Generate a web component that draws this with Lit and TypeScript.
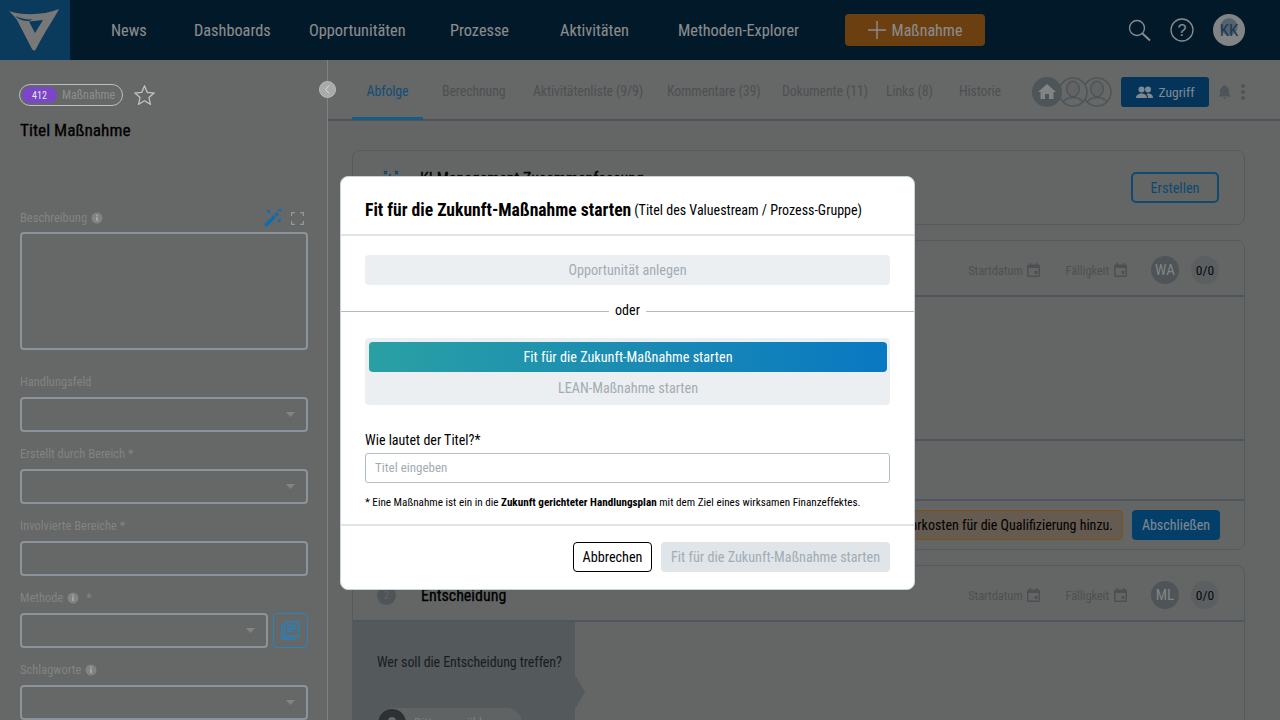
import { LitElement, html, css, svg } from "lit";
import { customElement } from "lit/decorators.js";

const FONT = css`"Liberation Sans Narrow", "Roboto Condensed", "Liberation Sans", sans-serif`;

const caret = html`<svg class="caret" width="9" height="5" viewBox="0 0 9 5"><path d="M0 0h9L4.500 5z"/></svg>`;
const info = html`<svg class="info" width="12" height="12" viewBox="0 0 12 12"><circle cx="6" cy="6" r="5.500" fill="currentColor"/><rect x="5.200" y="5" width="1.600" height="4" fill="#abacac"/><rect x="5.200" y="2.800" width="1.600" height="1.500" fill="#abacac"/></svg>`;
const cal = html`<svg class="cal" width="13" height="14" viewBox="0 0 13 14"><path fill="currentColor" d="M2.500 0H4v1.500h5V0h1.500v1.500h1A1.500 1.500 0 0 1 13 3v9.500a1.500 1.500 0 0 1-1.500 1.500h-10A1.500 1.500 0 0 1 0 12.500V3a1.500 1.500 0 0 1 1.500-1.500h1zM1.500 5v7.500h10V5zM7.500 8h3v3h-3z"/></svg>`;
const person = (x: number) => svg`<g transform="translate(${x} 0)"><circle cx="15" cy="15" r="14" fill="#abacac" stroke="#808e93" stroke-width="1.500"/><ellipse cx="15" cy="12" rx="7" ry="8.500" fill="#808e93"/><ellipse cx="15" cy="12" rx="5.500" ry="7" fill="#a2a6a8"/><path d="M5 25.500c2-4 6-5 10-5s8 1 10 5" fill="none" stroke="#808e93" stroke-width="1.300"/></g>`;

@customElement("app-root")
export class AppRoot extends LitElement {
  static styles = css`
    :host { display: block; width: 1280px; height: 720px; overflow: hidden; position: relative; font-family: ${FONT}; color: #000; background: #abacac; }
    .page { display: flex; flex-direction: column; height: 720px; }
    .top { flex: none; height: 60px; background: #042b46; display: flex; align-items: center; color: #e6e9eb; }
    .logo { width: 70px; height: 60px; background: #126199; display: flex; }
    .nav { display: flex; font-size: 16.300px; margin-left: 41px; }
    .nav span { flex: none; }
    .add { width: 140px; height: 32px; background: #b2691b; border-radius: 4px; display: flex; align-items: center; justify-content: center; gap: 6px; font-size: 16px; }
    .topicons { margin-left: auto; margin-right: 35px; display: flex; align-items: center; gap: 19px; }
    .avatar { width: 32px; height: 32px; border-radius: 50%; background: radial-gradient(circle at 50% 40%, #8aa4ba 0 8px, #d8dadc 9px); color: #2f6185; display: flex; align-items: center; justify-content: center; font-size: 17px; }
    .main { flex: 1; display: flex; min-height: 0; }
    .side { flex: none; width: 328px; box-sizing: border-box; border-right: 1px solid #7c8285; padding: 24px 20px 0; position: relative; z-index: 1; }
    .collapse { position: absolute; right: -9px; top: 21px; width: 17px; height: 17px; border-radius: 50%; border: 1px solid #b8bec2; background: #a8a9a9; box-sizing: border-box; display: flex; align-items: center; justify-content: center; }
    .badgeRow { display: flex; align-items: center; gap: 11px; height: 22px; margin-left: -1px; }
    .badge { display: flex; align-items: center; width: 104px; height: 22px; box-sizing: border-box; border: 1px solid #b8bec2; border-radius: 11px; padding: 2px; font-size: 12px; color: #8c8f90; gap: 5px; }
    .num { width: 35px; height: 16px; border-radius: 8px; background: #7b46c8; color: #e6e6ee; font-size: 10px; display: flex; align-items: center; justify-content: center; }
    .ttl { font-size: 17.300px; margin-top: 13px; height: 22px; line-height: 22px; -webkit-text-stroke: .3px #000; }
    .descHead { margin-top: 69px; display: flex; align-items: center; height: 16px; justify-content: space-between; }
    .lab { font-size: 12.500px; color: #808485; display: flex; align-items: center; gap: 4px; height: 16px; line-height: 16px; }
    .info { color: #808485; }
    .descIcons { display: flex; align-items: center; gap: 9px; padding-right: 4px; }
    .ta { height: 118px; margin-top: 6px; border: 2px solid #8b949b; box-sizing: border-box; border-radius: 4px; width: 288px; }
    .field { margin-top: 14px; }
    .field.first { margin-top: 24px; }
    .ctlRow { display: flex; gap: 5px; margin-top: 7px; }
    .ctl { flex: 1; height: 35px; border: 2px solid #8b949b; box-sizing: border-box; border-radius: 4px; display: flex; align-items: center; justify-content: flex-end; padding-right: 11px; }
    .caret path { fill: #808485; }
    .f { width: 288px; }
    .docbtn { flex: none; width: 35px; height: 35px; box-sizing: border-box; border: 1.500px solid #2a84bc; border-radius: 4px; display: flex; align-items: center; justify-content: center; }
    .content { flex: 1; min-width: 0; display: flex; flex-direction: column; background: #a7aaa8; }
    .tabs { flex: none; height: 61px; box-sizing: border-box; border-bottom: 2px solid #848a94; display: flex; align-items: center; background: #abacac; position: relative; padding-left: 24px; }
    .tablist { display: flex; align-self: stretch; font-size: 13.800px; letter-spacing: -.1px; color: #80868a; }
    .tab { flex: none; display: flex; align-items: center; box-sizing: border-box; height: 60px; padding-top: 2px; }
    .tab.on { color: #1a82c4; border-bottom: 3px solid #2a98dc; justify-content: center; margin-right: 19px; padding-top: 5px; }
    .acts { position: absolute; left: 704px; top: 17px; display: flex; align-items: center; }
    .zug { width: 88px; height: 30px; background: #075896; color: #d4e2ee; border-radius: 3px; margin-left: 9px; display: flex; align-items: center; justify-content: center; gap: 6px; font-size: 13.500px; }
    .bell { margin-left: 9px; display: flex; }
    .cards { flex: 1; min-height: 0; overflow: hidden; padding: 29px 35px 0 24px; display: flex; flex-direction: column; gap: 15px; }
    .card { flex: none; border: 1px solid #8b97a1; border-radius: 8px; box-sizing: border-box; }
    .c1 { height: 75px; display: flex; align-items: center; padding: 0 25px 0 27px; position: relative; }
    .kihead { position: absolute; left: 67px; top: 18px; font-size: 16px; -webkit-text-stroke: .3px #000; }
    .sparkle { margin-top: -16px; }
    .erst { margin-left: auto; width: 88px; height: 31px; border: 2px solid #1c7cb8; box-sizing: border-box; border-radius: 5px; color: #117bbb; font-size: 14.300px; display: flex; align-items: center; justify-content: center; }
    .c2 { height: 310px; display: flex; flex-direction: column; }
    .c3 { height: 200px; display: flex; flex-direction: column; border-bottom: 0; }
    .chead { flex: none; height: 56px; box-sizing: border-box; border-bottom: 2px solid #84909a; display: flex; align-items: center; padding: 4px 25px 0 24px; font-size: 12.500px; letter-spacing: -.1px; color: #80868a; }
    .numdot { width: 19px; height: 19px; border-radius: 50%; background: #838d92; color: #a7aaa8; font-size: 11px; display: flex; align-items: center; justify-content: center; }
    .cname { margin-left: 25px; font-size: 16px; letter-spacing: 0; color: #000; -webkit-text-stroke: .3px #000; }
    .cmeta { margin-left: auto; display: flex; align-items: center; }
    .cmeta .d { display: flex; align-items: center; gap: 5px; }
    .d + .d { margin-left: 25px; }
    .who { width: 28px; height: 28px; border-radius: 50%; background: #838d92; color: #d8dcde; display: flex; align-items: center; justify-content: center; margin-left: 24px; font-size: 15px; letter-spacing: 0; }
    .cnt { width: 28px; height: 28px; border-radius: 50%; background: #999ea3; color: #111; display: flex; align-items: center; justify-content: center; margin-left: 12px; font-size: 13.500px; letter-spacing: 0; }
    .cb1 { flex: none; height: 144px; border-bottom: 2px solid #84909a; box-sizing: border-box; }
    .cb2 { flex: none; height: 60px; border-bottom: 2px solid #84909a; box-sizing: border-box; }
    .cfoot { flex: 1; display: flex; align-items: center; justify-content: flex-end; padding-right: 24px; gap: 9px; }
    .warn { height: 30px; box-sizing: border-box; border: 1.500px solid #c98a30; border-radius: 4px; background: #a99886; padding: 0 9px; display: flex; align-items: center; font-size: 14px; white-space: nowrap; }
    .absch { width: 88px; height: 30px; background: #076ab0; border-radius: 4px; color: #d4e2ee; display: flex; align-items: center; justify-content: center; font-size: 14px; }
    .dec { flex: 1; display: flex; min-height: 0; }
    .decL { width: 222px; flex: none; background: #8c9498; padding: 31px 0 0 24px; box-sizing: border-box; position: relative; font-size: 14px; letter-spacing: -.1px; color: #2b3338; white-space: nowrap; line-height: 18px; }
    .decL::after { content: ""; position: absolute; right: -10px; top: 53px; border-left: 10px solid #8c9498; border-top: 17px solid transparent; border-bottom: 17px solid transparent; }
    .chip { margin-top: 37px; width: 144px; height: 30px; border-radius: 15px; background: #9ea5a7; display: flex; align-items: center; gap: 8px; padding-left: 1px; color: #d0d6d9; font-size: 13px; }
    .chip i { display: flex; align-items: center; justify-content: center; width: 28px; height: 28px; border-radius: 50%; background: #4c5256; }
    .chip i::before { content: ""; width: 8px; height: 8px; border-radius: 50%; background: #abacac; margin-top: -4px; }
    .scrim { position: absolute; inset: 0; background: rgba(0,0,0,.4); }
    .modal { position: absolute; left: 340px; top: 176px; width: 575px; height: 414px; box-sizing: border-box; background: #fff; border: 1px solid #c8d4da; border-radius: 8px; display: flex; flex-direction: column; }
    .mhead { flex: none; height: 59px; box-sizing: border-box; border-bottom: 2px solid #dee4e8; padding: 8px 24px 0; display: flex; align-items: center; gap: 3px; white-space: nowrap; }
    .mhead b { font-size: 17.600px; font-weight: 700; }
    .mhead span { font-size: 14px; }
    .mbody { flex: 1; display: flex; flex-direction: column; }
    .opp { margin: 19px 24px 0; height: 30px; background: #eceff2; border-radius: 4px; color: #a3acb3; font-size: 14.200px; display: flex; align-items: center; justify-content: center; }
    .oder { margin-top: 18px; height: 16px; display: flex; align-items: center; gap: 6px; font-size: 14px; }
    .oder span { margin-top: -3px; }
    .oder::before, .oder::after { content: ""; flex: 1; height: 1px; background: #b3bcc4; }
    .seg { margin: 19px 24px 0; height: 67px; background: #eceff2; border-radius: 4px; padding: 4px 3px 0 4px; box-sizing: border-box; color: #a3acb3; font-size: 14.200px; text-align: center; }
    .segon { height: 30px; border-radius: 4px; background: linear-gradient(90deg, #2aa0a4, #0a78c2); color: #fff; display: flex; align-items: center; justify-content: center; margin-bottom: 8px; }
    .q { margin: 26px 24px 0; font-size: 14px; height: 18px; line-height: 18px; }
    .inp { margin: 4px 24px 0; height: 30px; box-sizing: border-box; border: 1.500px solid #b3bfc6; border-radius: 3px; padding: 0 0 2px 9px; display: flex; align-items: center; color: #a3acb3; font-size: 13px; }
    .note { margin: 12px 24px 0; font-size: 11.150px; height: 15px; line-height: 15px; white-space: nowrap; }
    .note b { font-weight: 700; }
    .mfoot { flex: none; height: 65px; box-sizing: border-box; border-top: 2px solid #dee4e8; display: flex; align-items: flex-start; justify-content: flex-end; padding: 16px 24px 0 0; gap: 9px; }
    .abb { width: 79px; height: 30px; box-sizing: border-box; border: 1.500px solid #000; border-radius: 4px; font-size: 14.200px; display: flex; align-items: center; justify-content: center; }
    .go { width: 229px; height: 30px; border-radius: 4px; background: #dfe5e9; color: #a3acb3; font-size: 14.200px; display: flex; align-items: center; justify-content: center; }
  `;

  field(label: unknown, ctl: unknown, cls = "") {
    return html`<div class="field f ${cls}"><div class="lab">${label}</div><div class="ctlRow">${ctl}</div></div>`;
  }

  render() {
    const select = html`<div class="ctl">${caret}</div>`;
    const navItems: [string, number][] = [["News", 83], ["Dashboards", 115], ["Opportunitäten", 141], ["Prozesse", 110], ["Aktivitäten", 118], ["Methoden-Explorer", 167]];
    const tabs: [string, number][] = [["Abfolge", 71], ["Berechnung", 91], ["Aktivitätenliste (9/9)", 134], ["Kommentare (39)", 115], ["Dokumente (11)", 104], ["Links (8)", 73], ["Historie", 60]];
    return html`
      <div class="page">
        <div class="top">
          <div class="logo">
            <svg width="70" height="60" viewBox="0 0 70 60">
              <path fill="#c8c8c8" d="M9 11C24 16 44 15 59 9 55 17 47 28 36 49q-2 3-4 0L17 20C14 16 11 13 9 11z"/>
              <path fill="#126199" d="M15 16c7 3 13 4 18 3l-4 2c-5 0-10-1-14-5zM29 21.500 43 20 35 33z"/>
            </svg>
          </div>
          <div class="nav">${navItems.map(([t, w]) => html`<span style="width:${w}px">${t}</span>`)}</div>
          <div class="add"><svg width="18" height="18" viewBox="0 0 18 18"><path d="M9 0v18M0 9h18" stroke="#e6e9eb" stroke-width="1.500"/></svg>Maßnahme</div>
          <div class="topicons">
            <svg width="23" height="23" viewBox="0 0 23 23" fill="none" stroke="#e6e9eb"><circle cx="9" cy="9" r="7.500" stroke-width="1.300"/><path d="M14.500 14.500l7.500 7" stroke-width="2"/></svg>
            <svg width="24" height="24" viewBox="0 0 24 24" fill="none"><circle cx="12" cy="12" r="11" stroke="#e6e9eb" stroke-width="1.300"/><text x="12" y="17.500" text-anchor="middle" font-size="16" fill="#e6e9eb" font-family="Liberation Sans">?</text></svg>
            <div class="avatar">KK</div>
          </div>
        </div>
        <div class="main">
          <div class="side">
            <div class="collapse"><svg width="7" height="9" viewBox="0 0 7 9" fill="none"><path d="M5 .5L1.500 4.500 5 8.500" stroke="#d8dcde"/></svg></div>
            <div class="badgeRow">
              <div class="badge"><span class="num">412</span>Maßnahme</div>
              <svg width="21" height="20" viewBox="0 0 21 20" fill="none"><path d="M10.500 1l2.800 6.300 6.700.7-5 4.600 1.400 6.700-5.900-3.500-5.900 3.500 1.400-6.700-5-4.600 6.700-.7z" stroke="#bcc2c6" stroke-width="1.300"/></svg>
            </div>
            <div class="ttl">Titel Maßnahme</div>
            <div class="descHead f">
              <div class="lab">Beschreibung ${info}</div>
              <div class="descIcons">
                <svg width="18" height="18" viewBox="0 0 18 18"><path fill="#076fb2" d="M0 15.500 9.500 6l2.500 2.500L2.500 18zM10.500 5l2-2 2.500 2.500-2 2z"/><path stroke="#076fb2" stroke-width="1.200" d="M3 1l3 3M6 1L3 4M14.500 0l2.500 2.500M17 0l-2.500 2.500M14 10.500l2.500 2.500M16.500 10.500 14 13"/></svg>
                <svg width="13" height="13" viewBox="0 0 13 13" fill="none" stroke="#8f989d" stroke-width="1.200"><path d="M0.600 4V.6H4M9 .6h3.400V4M12.400 9v3.400H9M4 12.400H.6V9"/></svg>
              </div>
            </div>
            <div class="ta"></div>
            ${this.field("Handlungsfeld", select, "first")}
            ${this.field("Erstellt durch Bereich *", select)}
            ${this.field("Involvierte Bereiche *", html`<div class="ctl"></div>`)}
            ${this.field(html`Methode ${info} <span>&nbsp;*</span>`, html`${select}<div class="docbtn"><svg width="19" height="19" viewBox="0 0 19 19" fill="none"><rect x="3.500" y=".7" width="14.500" height="14.500" rx="1" stroke="#1e84c6" stroke-width="1.400"/><path d="M.8 3.500V17a1 1 0 0 0 1 1H15" stroke="#1e84c6" stroke-width="1.400"/><path d="M6 4.500h9.500M6 7.500h9.500M6 10.500h6" stroke="#1e84c6" stroke-width="1.500"/></svg></div>`)}
            ${this.field(html`Schlagworte ${info}`, select)}
          </div>
          <div class="content">
            <div class="tabs">
              <div class="tablist">${tabs.map(([t, w], i) => html`<div class="tab ${i === 0 ? "on" : ""}" style="width:${w}px">${t}</div>`)}</div>
              <div class="acts">
                <svg width="80" height="30" viewBox="0 0 80 30">
                  ${person(50)}${person(26)}
                  <circle cx="15" cy="15" r="15" fill="#808e93"/>
                  <path d="M15 7l9 8h-2.500v7h-4.500v-5h-4v5H8.500v-7H6z" fill="#d8dcde"/>
                </svg>
                <div class="zug"><svg width="17" height="13" viewBox="0 0 17 13" fill="#d4e2ee"><circle cx="5.500" cy="3.500" r="3"/><circle cx="12" cy="3.500" r="3"/><path d="M0 12c0-3 2.500-4.500 5.500-4.500S11 9 11 12zM12 12c0-1.500-.5-3-1.500-4 .5-.3 1-.4 1.500-.4 2.800 0 5 1.400 5 4.400z"/></svg>Zugriff</div>
                <div class="bell"><svg width="13" height="15" viewBox="0 0 13 15" fill="#808e93"><path d="M6.500 0C7.300 0 8 .6 8 1.400c2 .6 3 2.400 3 4.600v3l2 2.500H0L2 9V6c0-2.200 1-4 3-4.600C5 .6 5.700 0 6.500 0zM5 12.500h3a1.500 1.500 0 0 1-3 0z"/></svg></div>
                <svg style="margin-left:10px" width="4" height="16" viewBox="0 0 4 16" fill="#808e93"><circle cx="2" cy="2" r="2"/><circle cx="2" cy="8" r="2"/><circle cx="2" cy="14" r="2"/></svg>
              </div>
            </div>
            <div class="cards">
              <div class="card c1">
                <svg class="sparkle" width="20" height="20" viewBox="0 0 20 20"><path stroke="#076fb2" stroke-width="1.300" d="M4 1l3 3M7 1L4 4M15 1l3 3M18 1l-3 3M9 5h2"/></svg>
                <div class="kihead">KI-Management Zusammenfassung</div>
                <div class="erst">Erstellen</div>
              </div>
              <div class="card c2">
                <div class="chead"><div class="cmeta"><div class="d">Startdatum ${cal}</div><div class="d">Fälligkeit ${cal}</div><div class="who">WA</div><div class="cnt">0/0</div></div></div>
                <div class="cb1"></div>
                <div class="cb2"></div>
                <div class="cfoot"><div class="warn">Fügen Sie bitte die Mehrkosten für die Qualifizierung hinzu.</div><div class="absch">Abschließen</div></div>
              </div>
              <div class="card c3">
                <div class="chead"><div class="numdot">2</div><div class="cname">Entscheidung</div><div class="cmeta"><div class="d">Startdatum ${cal}</div><div class="d">Fälligkeit ${cal}</div><div class="who">ML</div><div class="cnt">0/0</div></div></div>
                <div class="dec"><div class="decL">Wer soll die Entscheidung treffen?<div class="chip"><i></i>Bitte auswählen</div></div></div>
              </div>
            </div>
          </div>
        </div>
      </div>
      <div class="scrim"></div>
      <div class="modal">
        <div class="mhead"><b>Fit für die Zukunft-Maßnahme starten</b><span>(Titel des Valuestream / Prozess-Gruppe)</span></div>
        <div class="mbody">
          <div class="opp">Opportunität anlegen</div>
          <div class="oder"><span>oder</span></div>
          <div class="seg"><div class="segon">Fit für die Zukunft-Maßnahme starten</div>LEAN-Maßnahme starten</div>
          <div class="q">Wie lautet der Titel?*</div>
          <div class="inp">Titel eingeben</div>
          <div class="note">* Eine Maßnahme ist ein in die <b>Zukunft gerichteter Handlungsplan</b> mit dem Ziel eines wirksamen Finanzeffektes.</div>
        </div>
        <div class="mfoot"><div class="abb">Abbrechen</div><div class="go">Fit für die Zukunft-Maßnahme starten</div></div>
      </div>
    `;
  }
}
